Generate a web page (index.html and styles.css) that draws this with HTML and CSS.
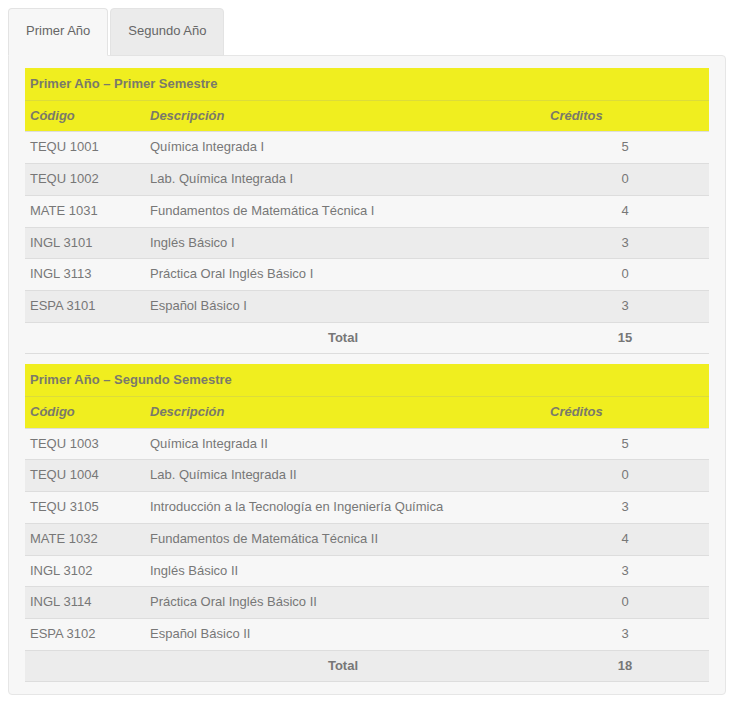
FILE: index.html
```html
<!DOCTYPE html>
<html lang="es">
<head>
<meta charset="utf-8">
<title>Plan de estudios</title>
<link rel="stylesheet" href="styles.css">
</head>
<body>
<div class="tabs">
  <ul class="tab-list">
    <li class="tab active">Primer Año</li>
    <li class="tab">Segundo Año</li>
  </ul>
  <div class="panel">
    <table class="course-table">
      <colgroup><col class="c-code"><col class="c-desc"><col class="c-cred"></colgroup>
      <thead>
        <tr class="title-row"><th colspan="3">Primer Año – Primer Semestre</th></tr>
        <tr class="head-row"><th>Código</th><th>Descripción</th><th>Créditos</th></tr>
      </thead>
      <tbody>
        <tr><td>TEQU 1001</td><td>Química Integrada I</td><td class="num">5</td></tr>
        <tr><td>TEQU 1002</td><td>Lab. Química Integrada I</td><td class="num">0</td></tr>
        <tr><td>MATE 1031</td><td>Fundamentos de Matemática Técnica I</td><td class="num">4</td></tr>
        <tr><td>INGL 3101</td><td>Inglés Básico I</td><td class="num">3</td></tr>
        <tr><td>INGL 3113</td><td>Práctica Oral Inglés Básico I</td><td class="num">0</td></tr>
        <tr><td>ESPA 3101</td><td>Español Básico I</td><td class="num">3</td></tr>
        <tr class="total"><td></td><td class="center">Total</td><td class="num">15</td></tr>
      </tbody>
    </table>
    <table class="course-table">
      <colgroup><col class="c-code"><col class="c-desc"><col class="c-cred"></colgroup>
      <thead>
        <tr class="title-row"><th colspan="3">Primer Año – Segundo Semestre</th></tr>
        <tr class="head-row"><th>Código</th><th>Descripción</th><th>Créditos</th></tr>
      </thead>
      <tbody>
        <tr><td>TEQU 1003</td><td>Química Integrada II</td><td class="num">5</td></tr>
        <tr><td>TEQU 1004</td><td>Lab. Química Integrada II</td><td class="num">0</td></tr>
        <tr><td>TEQU 3105</td><td>Introducción a la Tecnología en Ingeniería Química</td><td class="num">3</td></tr>
        <tr><td>MATE 1032</td><td>Fundamentos de Matemática Técnica II</td><td class="num">4</td></tr>
        <tr><td>INGL 3102</td><td>Inglés Básico II</td><td class="num">3</td></tr>
        <tr><td>INGL 3114</td><td>Práctica Oral Inglés Básico II</td><td class="num">0</td></tr>
        <tr><td>ESPA 3102</td><td>Español Básico II</td><td class="num">3</td></tr>
        <tr class="total"><td></td><td class="center">Total</td><td class="num">18</td></tr>
      </tbody>
    </table>
  </div>
</div>
</body>
</html>
```

FILE: styles.css
```css
html, body {
  margin: 0;
  padding: 0;
  background: #ffffff;
}
body {
  padding: 8px 6px 8px 8px;
  font-family: "Liberation Sans", Arial, sans-serif;
  font-size: 13px;
  color: #777777;
}
.tab-list {
  list-style: none;
  margin: 0 0 -1px 0;
  padding: 0;
  display: flex;
  gap: 2px;
  position: relative;
  z-index: 1;
}
.tab {
  padding: 13px 17px 15px 17px;
  line-height: 18px;
  border: 1px solid #e3e3e3;
  border-bottom: 1px solid #e3e3e3;
  border-radius: 4px 4px 0 0;
  background: #ebebeb;
  color: #666666;
}
.tab.active {
  background: #f7f7f7;
  border-bottom-color: #f7f7f7;
  color: #666666;
}
.panel {
  background: #f7f7f7;
  border: 1px solid #e6e6e6;
  border-radius: 0 4px 4px 4px;
  padding: 12px 16px 12px 16px;
}
.course-table {
  width: 100%;
  border-collapse: collapse;
  table-layout: fixed;
  margin-bottom: 10px;
}
.course-table:last-child {
  margin-bottom: 0;
}
.c-code { width: 120px; }
.c-desc { width: 400px; }
.c-cred { width: auto; }
.course-table th,
.course-table td {
  padding: 6px 5px;
  line-height: 18.7px;
  text-align: left;
  border-top: 1px solid #dddddd;
}
.title-row th {
  background: #f0ee1f;
  font-weight: bold;
  color: #7a7a6a;
  border-top: none;
  padding-top: 7px;
}
.head-row th {
  background: #f0ee1f;
  font-weight: bold;
  font-style: italic;
  color: #7a7a6a;
  border-top: 1px solid #dcdc3a;
}
.course-table tbody tr:nth-child(odd) td {
  background: #f7f7f7;
}
.course-table tbody tr:nth-child(even) td {
  background: #ececec;
}
.course-table tbody tr:last-child td {
  border-bottom: 1px solid #dddddd;
}
.num,
.center {
  text-align: center !important;
  padding-right: 9px !important;
}
.total td {
  font-weight: bold;
}
```
